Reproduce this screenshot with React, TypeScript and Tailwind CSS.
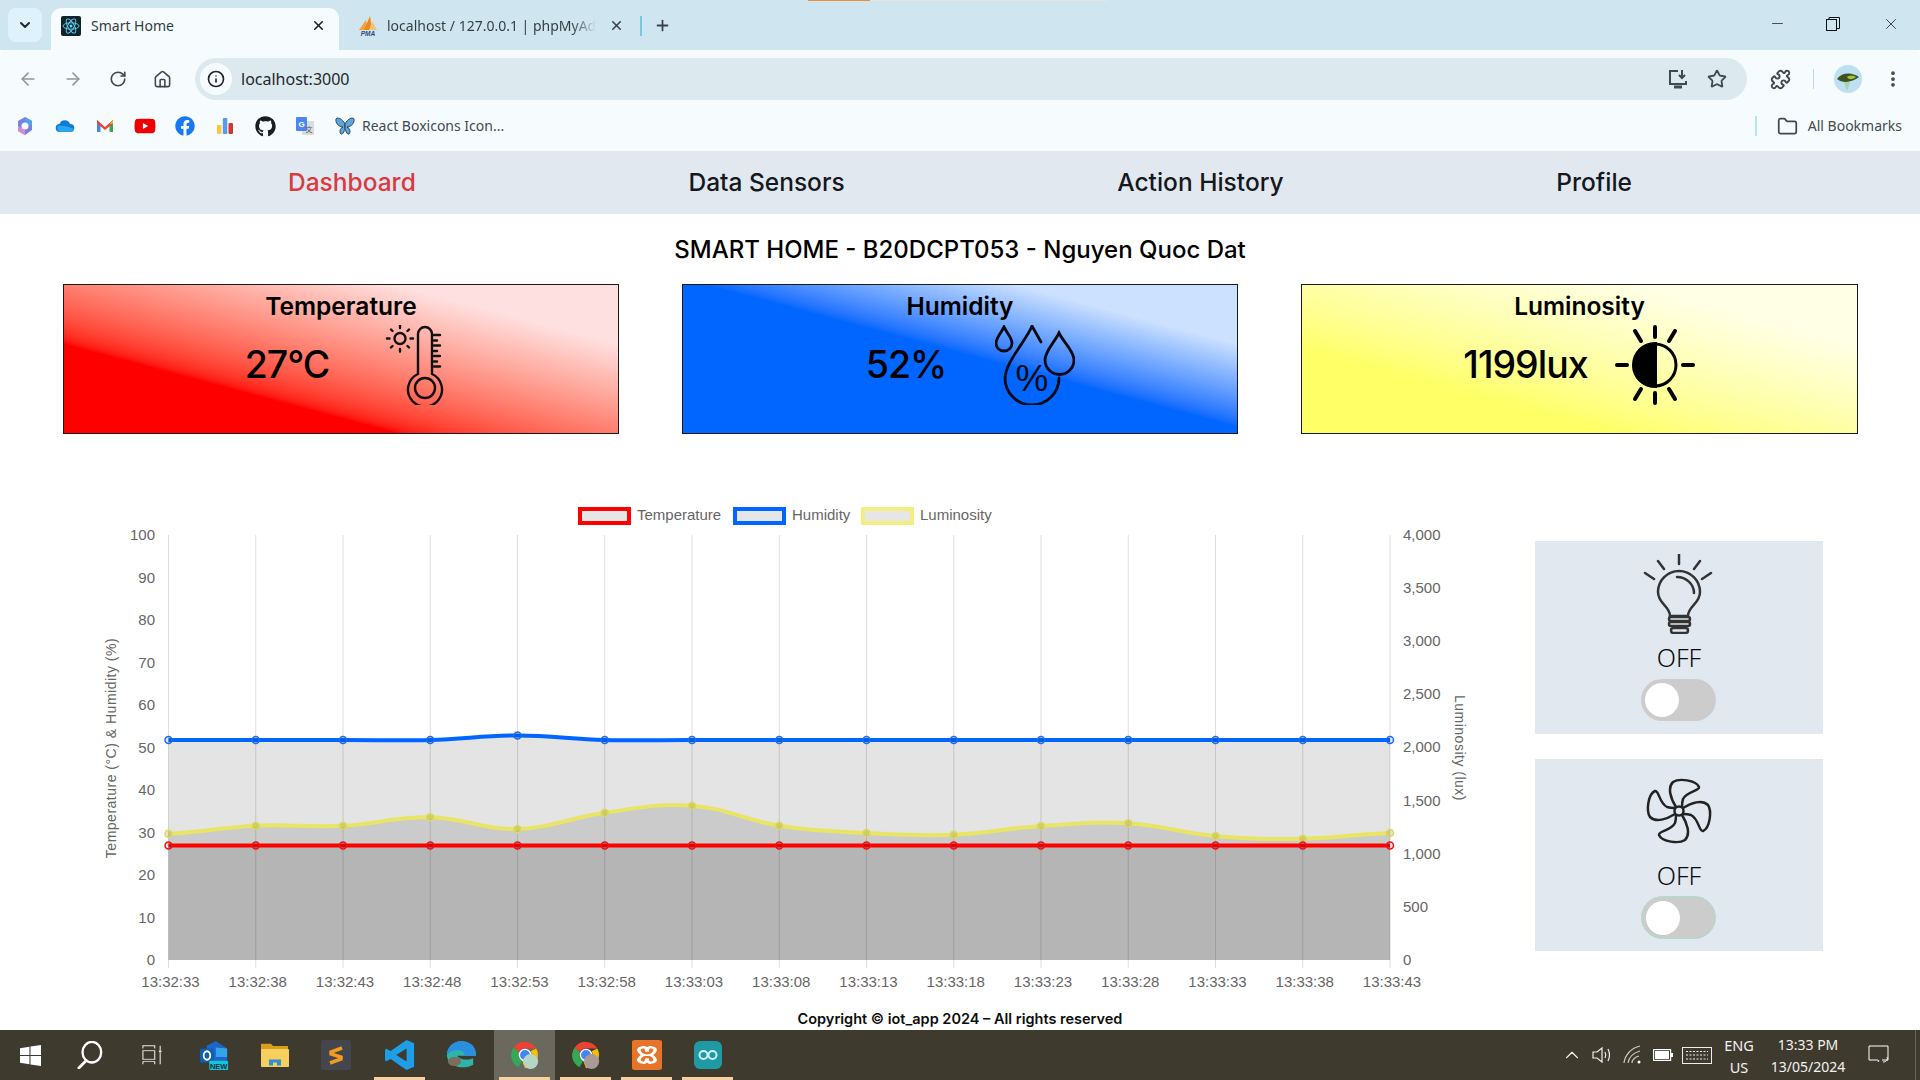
import React from 'react';
import { ArrowLeft, ArrowRight, RotateCw, Home, Star, Puzzle, EllipsisVertical, Folder, X, Plus, ChevronDown, ChevronUp, Minus, Info } from 'lucide-react';
import { FaFacebook, FaGithub, FaYoutube } from 'react-icons/fa';

const temps = Array(15).fill(845.5);
const hums = [740, 740, 740, 740, 735.5, 740, 740, 740, 740, 740, 740, 740, 740, 740, 740];
const lums = [833.7, 825.7, 825.7, 817.3, 829, 812.7, 805.7, 825.7, 833, 834.7, 826, 823.3, 836, 838.7, 833];
const labels = ['13:32:33', '13:32:38', '13:32:43', '13:32:48', '13:32:53', '13:32:58', '13:33:03', '13:33:08', '13:33:13', '13:33:18', '13:33:23', '13:33:28', '13:33:33', '13:33:38', '13:33:43'];
const xAt = (i: number) => 168.5 + i * 87.25;

// same spline chart.js uses with tension 0.4
const linePath = (ys: number[]) => {
  const t = 0.4;
  const cp = ys.map((y, i) => {
    const prev = ys[Math.max(i - 1, 0)];
    const next = ys[Math.min(i + 1, ys.length - 1)];
    const x = xAt(i);
    return { x, y, dy: (next - prev) * t * 0.5, dx: 87.25 * t };
  });
  let d = `M${cp[0].x} ${cp[0].y}`;
  for (let i = 1; i < cp.length; i++) {
    const a = cp[i - 1];
    const b = cp[i];
    d += ` C${a.x + a.dx} ${a.y + a.dy} ${b.x - b.dx} ${b.y - b.dy} ${b.x} ${b.y}`;
  }
  return d;
};
const areaPath = (ys: number[]) => `${linePath(ys)} L${xAt(14)} 960 L${xAt(0)} 960 Z`;

const Chart = () => {
  const series = [
    { ys: lums, color: '#e8e566', point: '#dcd95c' },
    { ys: hums, color: '#0066ff', point: '#1a6fe8' },
    { ys: temps, color: '#ff0000', point: '#ee1111' },
  ];
  const legend = [
    { x: 578, label: 'Temperature', color: '#ff0000' },
    { x: 733, label: 'Humidity', color: '#0066ff' },
    { x: 861, label: 'Luminosity', color: '#f2ee80' },
  ];
  return (
    <svg viewBox="63 490 1472 500" className="w-[1472px] h-[500px] shrink-0" fontFamily="Liberation Sans" fontSize="15" fill="#666">
      {legend.map((l) => (
        <g key={l.label}>
          <rect x={l.x + 2} y={509} width={49} height={14} fill="#e6e6e6" stroke={l.color} strokeWidth={4} />
          <text x={l.x + 59} y={520}>{l.label}</text>
        </g>
      ))}
      {labels.map((_, i) => (
        <line key={i} x1={xAt(i)} x2={xAt(i)} y1={535} y2={968} stroke="#dedede" />
      ))}
      {series.map((s) => (
        <path key={s.color} d={areaPath(s.ys)} fill="rgba(0,0,0,0.105)" stroke="none" />
      ))}
      {series.map((s) => (
        <g key={s.color}>
          <path d={linePath(s.ys)} fill="none" stroke={s.color} strokeWidth={4} />
          {s.ys.map((y, i) => (
            <circle key={i} cx={xAt(i)} cy={y} r={3.5} fill="rgba(0,0,0,0.1)" stroke={s.point} strokeWidth={1.5} />
          ))}
        </g>
      ))}
      {[100, 90, 80, 70, 60, 50, 40, 30, 20, 10, 0].map((v) => (
        <text key={v} x={155} y={960 - v * 4.25 + 5} textAnchor="end">{v}</text>
      ))}
      {['4,000', '3,500', '3,000', '2,500', '2,000', '1,500', '1,000', '500', '0'].map((v, i) => (
        <text key={v} x={1403} y={535 + i * 53.1 + 5}>{v}</text>
      ))}
      {labels.map((l, i) => (
        <text key={l} x={xAt(i) + 2} y={987} textAnchor="middle">{l}</text>
      ))}
      <text transform="translate(116 748) rotate(-90)" textAnchor="middle" fontSize="14" letterSpacing="0.5">Temperature (°C) &amp; Humidity (%)</text>
      <text transform="translate(1455 748) rotate(90)" textAnchor="middle" fontSize="14" letterSpacing="0.5">Luminosity (lux)</text>
    </svg>
  );
};

const ThermoIcon = () => (
  <svg viewBox="0 0 80 80" className="w-20 h-20" fill="none" stroke="#111" strokeWidth="2.400" strokeLinecap="round">
    <path d="M42 49 V9 A7 7 0 0 1 56 9 V49 A17 17 0 1 1 42 49 Z" />
    <circle cx="49" cy="63" r="10" />
    <path d="M58 10 H64 M58 15.500 H61 M58 20.500 H64 M58 26 H61 M58 31 H64 M58 36.500 H61 M58 41.500 H64" />
    <circle cx="24" cy="13.500" r="5.500" />
    <path d="M24 3 V0.500 M24 24 V26.500 M13.500 13.500 H11 M34.500 13.500 H37 M16.500 6 L15 4.500 M31.500 6 L33 4.500 M16.500 21 L15 22.500 M31.500 21 L33 22.500" />
  </svg>
);

const DropsIcon = () => (
  <svg viewBox="0 0 80 80" className="w-20 h-20" fill="none" stroke="#0a0a14" strokeWidth="2.800" strokeLinecap="round">
    <path d="M9 2 C6 8 1 13 1 18 A8 8 0 0 0 17 18 C17 13 12 8 9 2 Z" />
    <path d="M46 17 L37 1 C31 16 11 36 10 53 A27 27 0 0 0 64 53" />
    <path d="M64 8 C59 18 50 26 50 35 A14.500 14.500 0 0 0 79 35 C79 26 69 18 64 8 Z" />
    <text x="37" y="66" textAnchor="middle" fontSize="37" fill="#0a0a14" stroke="none" fontFamily="Liberation Sans">%</text>
  </svg>
);

const SunIcon = () => (
  <svg viewBox="0 0 80 80" className="w-20 h-20" fill="none" stroke="#000" strokeWidth="4" strokeLinecap="round">
    <circle cx="40" cy="40" r="21" strokeWidth="3" />
    <path d="M40 19 A21 21 0 0 0 40 61 Z" fill="#000" />
    <path d="M40 2 V12 M40 68 V78 M2 40 H12 M68 40 H78 M20 6 L26 16 M60 6 L54 16 M20 74 L26 64 M60 74 L54 64" />
  </svg>
);

const BulbIcon = () => (
  <svg viewBox="0 0 80 80" className="w-20 h-20" fill="none" stroke="#333" strokeWidth="2.500" strokeLinecap="round">
    <path d="M40 0 V10 M19 7 L25 15 M61 7 L55 15 M6 19 L15 25 M72 19 L63 25" />
    <path d="M31 62 C31 52 19 50 19 38 A21 21 0 0 1 61 38 C61 50 49 52 49 62 Z" />
    <path d="M38 23 C47 23 55 30 55 39" />
    <rect x="30" y="63" width="21" height="4" rx="2" />
    <rect x="30" y="68" width="21" height="4" rx="2" />
    <rect x="32" y="74" width="17" height="5" rx="2.500" />
  </svg>
);

const FanIcon = () => (
  <svg viewBox="-40 -33 80 66" className="w-20 h-[66px]" fill="none" stroke="#222" strokeWidth="2.500" strokeLinejoin="round">
    {[0, 90, 180, 270].map((r) => (
      <path key={r} transform={`rotate(${r})`} d="M-3 -4 C-8 -12 -12 -23 -6 -29 C0 -33 17 -31 20 -24 C21 -20 8 -20 4 -12 C3 -9 3 -7 3 -4" />
    ))}
    <circle r="4.500" />
  </svg>
);

const ReactFavicon = () => (
  <svg viewBox="0 0 20 20" className="w-5 h-5">
    <rect width="20" height="20" rx="2" fill="#10232b" />
    <g fill="none" stroke="#61dafb" strokeWidth="0.900">
      <ellipse cx="10" cy="10" rx="8" ry="3.200" />
      <ellipse cx="10" cy="10" rx="8" ry="3.200" transform="rotate(60 10 10)" />
      <ellipse cx="10" cy="10" rx="8" ry="3.200" transform="rotate(120 10 10)" />
    </g>
    <circle cx="10" cy="10" r="1.500" fill="#61dafb" />
  </svg>
);

const PmaFavicon = () => (
  <svg viewBox="0 0 20 20" className="w-5 h-5">
    <path d="M1 14 L8 4 L10 14 Z" fill="#f4a23c" />
    <path d="M6 14 L12 0 L14 14 Z" fill="#e88a1f" />
    <path d="M11 14 L14 5 L19 14 Z" fill="#f7c178" />
    <text x="10" y="20" textAnchor="middle" fontSize="6.500" fontWeight="700" fontStyle="italic" fill="#2c4a78" fontFamily="Liberation Sans">PMA</text>
  </svg>
);

const CopilotMark = () => (
  <svg viewBox="0 0 20 20" className="w-5 h-5">
    <path d="M10 1 L17 5 V14 L10 19 L3 15 V5 Z" fill="#7a7fe0" />
    <path d="M10 1 L17 5 V10 L10 6 Z" fill="#4da3ea" />
    <path d="M3 10 L10 14 V19 L3 15 Z" fill="#d58ad8" />
    <circle cx="10" cy="10" r="3.500" fill="#f6fbfe" />
  </svg>
);

const CloudMark = () => (
  <svg viewBox="0 0 20 20" className="w-5 h-5">
    <path d="M5 16 A4 4 0 0 1 4.500 8 A5.500 5.500 0 0 1 15 8 A4 4 0 0 1 15.500 16 Z" fill="#0f7bd4" />
    <path d="M5 16 A4 4 0 0 1 3 10 C8 9 14 11 19 13 A4 4 0 0 1 15.500 16 Z" fill="#2aa6ee" />
  </svg>
);

const GmailMark = () => (
  <svg viewBox="0 0 20 20" className="w-5 h-5">
    <path d="M2 4 V16 H5.500 V8 Z" fill="#4285f4" />
    <path d="M18 4 V16 H14.500 V8 Z" fill="#34a853" />
    <path d="M2 4 L10 11 L18 4 V7.500 L10 14 L2 7.500 Z" fill="#ea4335" />
    <path d="M14.500 8 L18 4 V7.500 Z" fill="#fbbc04" />
  </svg>
);

const BarsMark = () => (
  <svg viewBox="0 0 20 20" className="w-5 h-5">
    <rect x="2" y="9" width="4.500" height="9" rx="1" fill="#f9c542" />
    <rect x="7.800" y="2" width="4.500" height="16" rx="1" fill="#5a9be8" />
    <rect x="13.500" y="7" width="4.500" height="11" rx="1" fill="#d6362f" />
  </svg>
);

const TranslateMark = () => (
  <svg viewBox="0 0 20 20" className="w-5 h-5">
    <rect x="7" y="5" width="12" height="14" fill="#d9dde2" />
    <rect x="1" y="1" width="11" height="14" rx="1" fill="#4c86ee" />
    <text x="6.500" y="11" textAnchor="middle" fontSize="8" fontWeight="700" fill="#fff" fontFamily="Liberation Sans">G</text>
    <text x="14" y="16" textAnchor="middle" fontSize="7" fill="#555" fontFamily="Noto Sans CJK SC">文</text>
  </svg>
);

const ButterflyMark = () => (
  <svg viewBox="0 0 20 20" className="w-5 h-5">
    <path d="M10 8 C7 2 2 1 1 3 C0 7 4 11 8 11 C5 12 4 16 6 18 C8 19 10 14 10 11 Z" fill="#5aa6de" stroke="#1d2c3c" strokeWidth="0.800" />
    <path d="M10 8 C13 2 18 1 19 3 C20 7 16 11 12 11 C15 12 16 16 14 18 C12 19 10 14 10 11 Z" fill="#5aa6de" stroke="#1d2c3c" strokeWidth="0.800" />
  </svg>
);

const Bookmark = ({ children }: { children: React.ReactNode }) => (
  <div className="w-10 h-6 flex items-center justify-center shrink-0">{children}</div>
);

const ToolBtn = ({ children, className }: { children: React.ReactNode; className?: string }) => (
  <div className={`h-8 flex items-center justify-center shrink-0 ${className ?? ''}`}>{children}</div>
);

const Browser = () => (
  <>
    {/* tab strip */}
    <div className="relative h-[50px] shrink-0 bg-[#cfe5ef] flex items-end font-['Noto_Sans'] text-[14px] text-[#333b40]">
      <div className="absolute top-0 left-[808px] w-[62px] h-px bg-[#e8913c]" />
      <div className="absolute top-0 left-[870px] w-[238px] h-px bg-[#e3e6d8]" />
      <div className="w-[34px] h-[34px] ml-2 mb-2 rounded-lg bg-[#dff2fb] flex items-center justify-center shrink-0">
        <ChevronDown size={16} strokeWidth={3} color="#20282c" />
      </div>
      <div className="w-[288px] h-[42px] ml-[9px] rounded-t-[10px] bg-[#f6fbfe] flex items-center pl-[10px] pr-[13px] pb-[7px] shrink-0">
        <ReactFavicon />
        <span className="ml-[10px] flex-1">Smart Home</span>
        <X size={15} strokeWidth={2.5} color="#1c2226" />
      </div>
      <div className="w-[340px] h-[42px] flex items-center pl-[19px] pb-[7px] shrink-0">
        <PmaFavicon />
        <span className="ml-[9px] whitespace-nowrap bg-linear-to-r from-[#333b40] from-88% to-[#cfe5ef] bg-clip-text text-transparent">localhost / 127.0.0.1 | phpMyAd</span>
        <X size={15} strokeWidth={2.5} color="#384248" className="ml-[13px]" />
        <div className="w-[2px] h-[20px] bg-[#7cc6e2] ml-4" />
        <Plus size={17} strokeWidth={2.5} color="#384248" className="ml-3" />
      </div>
      <div className="ml-auto h-full flex items-center pb-[3px] text-[#1a1a1a]">
        <Minus size={17} strokeWidth={1} color="#111" className="mr-[40px]" />
        <svg viewBox="0 0 14 14" className="w-[14px] h-[14px] mr-[42px]" fill="none" stroke="#111">
          <rect x="0.500" y="2.500" width="10" height="11" />
          <path d="M3 2.500 V0.500 H13.500 V11.500 H10.500" />
        </svg>
        <X size={18} strokeWidth={1} color="#111" className="mr-[20px]" />
      </div>
    </div>

    {/* toolbar */}
    <div className="h-[58px] shrink-0 bg-[#f6fbfe] rounded-t-lg flex items-center text-[#3f4a50] font-['Noto_Sans']">
      <ToolBtn className="w-[45px] ml-[5px]"><ArrowLeft size={20} color="#8f999e" /></ToolBtn>
      <ToolBtn className="w-[45px]"><ArrowRight size={20} color="#8f999e" /></ToolBtn>
      <ToolBtn className="w-[45px]"><RotateCw size={18} strokeWidth={2.2} /></ToolBtn>
      <ToolBtn className="w-[45px]"><Home size={19} /></ToolBtn>
      <div className="ml-[10px] w-[1552px] h-[42px] rounded-full bg-[#dceaf0] flex items-center pl-[5px] pr-5 shrink-0">
        <div className="w-8 h-8 rounded-full bg-[#f6fbfe] flex items-center justify-center">
          <Info size={18} strokeWidth={2.2} color="#1f2529" />
        </div>
        <span className="ml-[9px] text-[16px] text-[#22282c]">localhost:3000</span>
        <svg viewBox="0 0 22 22" className="ml-auto w-[22px] h-[22px]" fill="none" stroke="#3f4a50" strokeWidth="2">
          <path d="M11 3 H3 V16 H19 V13" />
          <path d="M7 19 H15" strokeWidth="3" />
          <path d="M15 2 V10 M12 7 L15 10 L18 7" />
        </svg>
        <Star size={20} strokeWidth={2.2} className="ml-[18px]" />
      </div>
      <ToolBtn className="w-8 ml-[17px]"><Puzzle size={21} strokeWidth={2.2} /></ToolBtn>
      <div className="w-px h-[20px] bg-[#b9dbe9] ml-[17px]" />
      <div className="ml-[20px] w-7 h-7 rounded-full bg-[#bde0f2] flex items-center justify-center shrink-0">
        <svg viewBox="0 0 28 28" className="w-7 h-7">
          <path d="M3 14 C8 7 18 7 25 12 C19 17 9 19 3 14 Z" fill="#3d5420" />
          <path d="M13 12 C16 10 20 11 22 12 C18 15 15 15 13 12 Z" fill="#a8c23a" />
          <path d="M10 17 L13 26 L16 17 Z" fill="#a7d3b0" />
        </svg>
      </div>
      <ToolBtn className="w-8 ml-[15px]"><EllipsisVertical size={20} strokeWidth={2.5} /></ToolBtn>
    </div>

    {/* bookmarks */}
    <div className="h-[43px] shrink-0 bg-[#f6fbfe] flex items-start pl-[5px] pt-[6px] font-['Noto_Sans'] text-[14px] text-[#3f4a50]">
      <Bookmark><CopilotMark /></Bookmark>
      <Bookmark><CloudMark /></Bookmark>
      <Bookmark><GmailMark /></Bookmark>
      <Bookmark><FaYoutube size={22} color="#f00000" /></Bookmark>
      <Bookmark><FaFacebook size={20} color="#1877f2" /></Bookmark>
      <Bookmark><BarsMark /></Bookmark>
      <Bookmark><FaGithub size={21} color="#1a1e22" /></Bookmark>
      <Bookmark><TranslateMark /></Bookmark>
      <Bookmark><ButterflyMark /></Bookmark>
      <span className="ml-[-3px] leading-6">React Boxicons Icon...</span>
      <div className="ml-auto w-[2px] h-[20px] mt-[2px] bg-[#b7e2f3]" />
      <Folder size={21} strokeWidth={2} className="ml-[20px] mt-[2px]" />
      <span className="ml-[10px] mr-[18px] leading-6">All Bookmarks</span>
    </div>
  </>
);

const navItems = ['Dashboard', 'Data Sensors', 'Action History', 'Profile'];

const Nav = () => (
  <nav className="h-[63px] shrink-0 bg-slate-200 flex items-center justify-between px-[288px] font-[Inter] text-[24.500px] font-medium text-[#15181c]">
    {navItems.map((n, i) => (
      <a key={n} className={i === 0 ? 'text-[#d83a40]' : ''}>{n}</a>
    ))}
  </nav>
);

const cards = [
  { title: 'Temperature', value: '27°C', icon: <ThermoIcon />, bg: 'bg-linear-to-tr from-[#ff0000] from-30% to-[#ffe0e0] to-80%' },
  { title: 'Humidity', value: '52%', icon: <DropsIcon />, bg: 'bg-linear-to-tr from-[#0066ff] from-52% to-[#cce0ff] to-80%' },
  { title: 'Luminosity', value: '1199lux', icon: <SunIcon />, bg: 'bg-linear-to-tr from-[#ffff66] from-28% to-[#ffffe6] to-80%' },
];

const Toggle = ({ ring }: { ring?: boolean }) => (
  <div className={`w-[75px] mr-[2px] rounded-full bg-[#cccccc] flex items-center pl-[4px] ${ring ? 'h-[43px] border border-[#a8e0c4]' : 'h-[42px]'}`}>
    <div className="w-[34px] h-[34px] rounded-full bg-white" />
  </div>
);

const Dashboard = () => (
  <main className="flex-1 min-h-0 flex flex-col bg-white text-black font-[Inter]">
    <h1 className="h-[70px] pt-5 text-center text-[24px] leading-8 font-medium">SMART HOME - B20DCPT053 - Nguyen Quoc Dat</h1>
    <div className="grid grid-cols-[556px_556px_557px] gap-[63px] pl-[63px]">
      {cards.map((c) => (
        <div key={c.title} className={`h-[150px] border border-[#1a1a1a] flex flex-col items-center pt-[5px] ${c.bg}`}>
          <h2 className="text-[24.500px] leading-8 font-semibold">{c.title}</h2>
          <div className="flex items-center gap-7 mt-[3px] w-[230px]">
            <span className="w-[122px] shrink-0 flex justify-center whitespace-nowrap text-[37.500px] font-medium tracking-[-1px]">{c.value}</span>
            <div className="shrink-0">{c.icon}</div>
          </div>
        </div>
      ))}
    </div>
    <div className="mt-14 flex items-start pl-[63px]">
      <Chart />
      <div className="w-[288px] mt-[51px] flex flex-col gap-[25px] font-['Noto_Sans'] text-[25px] font-light text-[#0a0a0a]">
        <div className="h-[193px] bg-slate-200 flex flex-col items-center pt-[13px]">
          <BulbIcon />
          <span className="mt-[7px] leading-8">OFF</span>
          <div className="mt-[6px]"><Toggle /></div>
        </div>
        <div className="h-[192px] bg-slate-200 flex flex-col items-center pt-[19px]">
          <FanIcon />
          <span className="mt-[15px] leading-8">OFF</span>
          <div className="mt-[5px]"><Toggle ring /></div>
        </div>
      </div>
    </div>
    <footer className="mt-auto pt-[18px] h-[40px] flex items-center justify-center text-[14.500px] font-semibold text-[#0d0d0d]">
      Copyright © iot_app 2024 – All rights reserved
    </footer>
  </main>
);

const ChromeIcon = ({ avatar }: { avatar: string }) => (
  <svg viewBox="0 0 32 32" className="w-[30px] h-[30px]">
    <path d="M16 2 A14 14 0 0 1 28 9 H16 A7 7 0 0 0 9.500 13 L4 8 A14 14 0 0 1 16 2 Z" fill="#ea4335" />
    <path d="M4 8 L9.500 13 A7 7 0 0 0 13 22 L9 29 A14 14 0 0 1 4 8 Z" fill="#34a853" />
    <path d="M28 9 A14 14 0 0 1 16 30 L13 22 A7 7 0 0 0 22 12 Z" fill="#fbbc04" />
    <circle cx="16" cy="16" r="6" fill="#4285f4" stroke="#fff" strokeWidth="1.500" />
    <circle cx="22" cy="23" r="8" fill={avatar} />
  </svg>
);

const TaskIcon = ({ children, active, line, className }: { children: React.ReactNode; active?: boolean; line?: boolean; className?: string }) => (
  <div className={`relative h-full flex items-center justify-center shrink-0 w-[61px] ${active ? 'bg-[#6b685e]' : ''} ${className ?? ''}`}>
    {children}
    {line && <div className="absolute bottom-0 left-[5px] right-[5px] h-[3px] bg-[#f8cf9f]" />}
  </div>
);

const Taskbar = () => (
  <div className="h-[50px] shrink-0 bg-[#3f3a2e] flex items-stretch text-[#f2f2f0] font-['Noto_Sans'] text-[14px]">
    <div className="w-[60px] flex items-center justify-center shrink-0">
      <svg viewBox="0 0 20 20" className="w-[21px] h-[21px]" fill="#fff">
        <path d="M0 3 L9 1.700 V9.500 H0 Z M10 1.500 L20 0 V9.500 H10 Z M0 10.500 H9 V18.300 L0 17 Z M10 10.500 H20 V20 L10 18.500 Z" />
      </svg>
    </div>
    <div className="w-[60px] flex items-center justify-center shrink-0">
      <svg viewBox="0 0 30 30" className="w-7 h-7" fill="none" stroke="#fff" strokeWidth="2.500" strokeLinecap="round">
        <ellipse cx="17" cy="12" rx="10" ry="11" />
        <path d="M11 21 L3 29" strokeWidth="3" />
      </svg>
    </div>
    <div className="w-[63px] flex items-center justify-center shrink-0">
      <svg viewBox="0 0 22 28" preserveAspectRatio="none" className="w-5 h-5" fill="none" stroke="#e8e8e4" strokeWidth="1.200">
        <path d="M1 5 V1 H14 V5 M1 23 V27 M14 23 V27 M1 23 H14" />
        <rect x="1" y="8" width="13" height="12" />
        <path d="M20 1 V7 M20 11 V27" />
        <circle cx="20" cy="9" r="1" fill="#e8e8e4" />
      </svg>
    </div>
    <TaskIcon>
      <svg viewBox="0 0 32 32" className="w-[30px] h-[30px]">
        <path d="M8 6 L18 1 L30 9 V26 H12 Z" fill="#1a66c9" />
        <path d="M18 8 L30 9 V18 H18 Z" fill="#30a6e8" />
        <rect x="1" y="9" width="15" height="15" rx="2" fill="#0f5fb5" />
        <ellipse cx="8.500" cy="16.500" rx="3.500" ry="4.500" fill="none" stroke="#fff" strokeWidth="2" />
        <rect x="11" y="22" width="20" height="10" rx="1" fill="#18c2d8" />
        <text x="21" y="30.500" textAnchor="middle" fontSize="8" fontWeight="700" fill="#10313a" fontFamily="Liberation Sans">NEW</text>
      </svg>
    </TaskIcon>
    <TaskIcon>
      <svg viewBox="0 0 28 32" preserveAspectRatio="none" className="w-7 h-6">
        <path d="M0 1 H10 L12 4 H27 V30 H0 Z" fill="#d79f1c" />
        <rect x="0" y="8" width="28" height="24" rx="1" fill="#f6cf5c" />
        <path d="M8 30 V22 H20 V30 H16 V26 H12 V30 Z" fill="#2f8ed8" />
      </svg>
    </TaskIcon>
    <TaskIcon>
      <svg viewBox="0 0 30 30" className="w-[30px] h-[30px]">
        <rect width="30" height="30" rx="2" fill="#43464c" />
        <path d="M21 8 L10 12 V14 L20 17 V19 L9 23" stroke="#f49a1f" strokeWidth="3.500" fill="none" />
      </svg>
    </TaskIcon>
    <TaskIcon line className="ml-[3px]">
      <svg viewBox="0 0 32 46" preserveAspectRatio="none" className="w-[30px] h-[30px]">
        <path d="M23 0 L31 5 V41 L23 46 L6 29 L1 33 L0 30 V16 L1 13 L6 17 Z M23 13 L12 23 L23 33 Z" fill="#1e9ee6" />
      </svg>
    </TaskIcon>
    <TaskIcon>
      <svg viewBox="0 0 32 46" preserveAspectRatio="none" className="w-[30px] h-[30px]">
        <path d="M16 2 C26 2 32 10 32 24 H12 C14 30 24 32 29 28 V38 C20 46 2 42 1 24 C1 12 7 2 16 2 Z" fill="#2fb5a8" />
        <path d="M16 2 C8 2 1 10 1 24 C4 14 20 12 20 24 H32 C32 10 26 2 16 2 Z" fill="#2a8fe0" />
        <circle cx="9" cy="33" r="7" fill="#7b6c5c" />
      </svg>
    </TaskIcon>
    <TaskIcon active line className="ml-[3px]"><ChromeIcon avatar="#b5d6c4" /></TaskIcon>
    <TaskIcon line><ChromeIcon avatar="#a89a96" /></TaskIcon>
    <TaskIcon line>
      <svg viewBox="0 0 30 46" preserveAspectRatio="none" className="w-[30px] h-[30px]">
        <rect width="30" height="46" rx="3" fill="#e8742a" />
        <path d="M9 12 C15 8 15 18 15 18 C15 18 15 8 21 12 C26 15 21 22 18 23 C21 24 26 31 21 34 C15 38 15 28 15 28 C15 28 15 38 9 34 C4 31 9 24 12 23 C9 22 4 15 9 12 Z" fill="none" stroke="#fff" strokeWidth="3.500" />
      </svg>
    </TaskIcon>
    <TaskIcon line>
      <svg viewBox="0 0 28 28" className="w-7 h-7">
        <rect width="28" height="28" rx="6" fill="#1f9aa5" />
        <g fill="none" stroke="#cfeeee" strokeWidth="2">
          <circle cx="9.500" cy="14" r="4" />
          <circle cx="18.500" cy="14" r="4" />
        </g>
      </svg>
    </TaskIcon>

    <div className="ml-auto flex items-center shrink-0">
      <ChevronUp size={22} strokeWidth={1.2} className="mr-[9px]" />
      <svg viewBox="0 0 22 18" className="w-[22px] h-[18px] mr-[9px]" fill="none" stroke="#eee" strokeWidth="1.200">
        <path d="M1 6 H5 L10 2 V16 L5 12 H1 Z" />
        <path d="M13 6 C14 8 14 10 13 12 M16 3 C18 7 18 11 16 15" />
      </svg>
      <svg viewBox="0 0 20 20" className="w-5 h-5 mr-[10px]" fill="none" stroke="#c9c7c0" strokeWidth="1.200">
        <path d="M1 18 C2 10 8 3 17 1 M5 18 C6 12 10 8 17 6 M9 18 C9 15 12 12 16 11" />
        <circle cx="16" cy="17" r="1.500" fill="#fff" stroke="none" />
      </svg>
      <svg viewBox="0 0 20 12" className="w-[20px] h-[12px] mr-[9px]" fill="none" stroke="#fff" strokeWidth="1.200">
        <rect x="0.600" y="0.600" width="17" height="10.800" />
        <rect x="2" y="2" width="14" height="8" fill="#fff" stroke="none" />
        <rect x="18" y="4" width="2" height="4" fill="#fff" stroke="none" />
      </svg>
      <svg viewBox="0 0 30 17" className="w-[30px] h-[17px] mr-[7px]" fill="none" stroke="#eee" strokeWidth="1">
        <rect x="0.500" y="0.500" width="29" height="16" />
        <path d="M4 4.500 H26 M4 8 H26 M4 12 H26" strokeDasharray="2 1.500" />
      </svg>
      <div className="w-[40px] text-center leading-[22px] mt-[2px] mr-[9px] text-[14.500px]">ENG<br />US</div>
      <div className="w-[80px] text-center leading-[22px] mt-[2px] mr-[20px]">13:33 PM<br />13/05/2024</div>
      <svg viewBox="0 0 22 20" className="w-[22px] h-[20px] mr-[25px]" fill="none" stroke="#fff" strokeWidth="1">
        <path d="M1 1 H20 V15 H14 M10 15 H1 V1" />
        <path d="M10 17 L11 15 M15 17 C19 17 20 14 19 12" />
      </svg>
      <div className="w-px h-full bg-[#6a665b] mr-[4px]" />
    </div>
  </div>
);

export default function App() {
  return (
    <div className="w-[1920px] h-[1080px] flex flex-col overflow-hidden bg-white">
      <Browser />
      <Nav />
      <Dashboard />
      <Taskbar />
    </div>
  );
}
